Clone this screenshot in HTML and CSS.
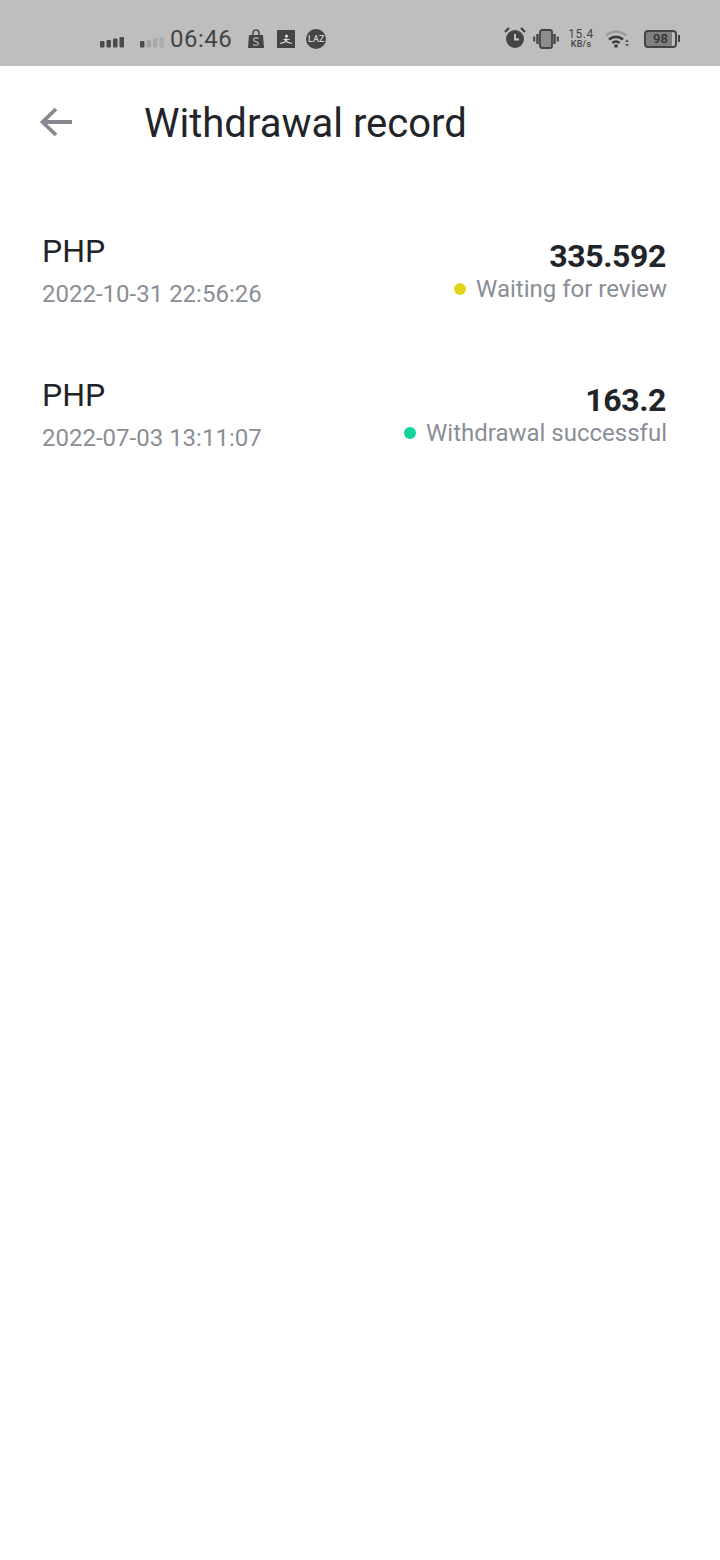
FILE: index.html
```html
<!DOCTYPE html>
<html lang="en">
<head>
<meta charset="utf-8">
<title>Withdrawal record</title>
<link rel="stylesheet" href="styles.css">
</head>
<body>
<div class="statusbar">
  <div class="sb-left">
    <svg class="sig" width="25" height="12" viewBox="0 0 25 12"><rect x="0" y="5" width="4.500" height="6.500" rx="1" fill="#4a4a4a"/><rect x="6.500" y="4" width="4.500" height="7.500" rx="1" fill="#4a4a4a"/><rect x="13" y="2.500" width="4.500" height="9" rx="1" fill="#4a4a4a"/><rect x="19.500" y="1" width="4.500" height="10.500" rx="1" fill="#4a4a4a"/></svg>
    <svg class="sig2" width="25" height="12" viewBox="0 0 25 12"><rect x="0" y="5" width="4.500" height="6.500" rx="1" fill="#4a4a4a"/><rect x="6.500" y="4" width="4.500" height="7.500" rx="1" fill="#a2a2a2"/><rect x="13" y="2.500" width="4.500" height="9" rx="1" fill="#a8a8a8"/><rect x="19.500" y="1" width="4.500" height="10.500" rx="1" fill="#acacac"/></svg>
    <span class="time">06:46</span>
    <svg class="ic-shop" width="16" height="20" viewBox="0 0 16 20"><path d="M5 6V4a3 3 0 0 1 6 0v2" fill="none" stroke="#444" stroke-width="1.500"/><path d="M1 6h14l1 13H0z" fill="#444"/><path d="M10.500 9.500c-1-1-5-1-5 1.300s5 1.400 5 3.700-4 2-5.500 1" fill="none" stroke="#bdbdbd" stroke-width="1.100"/></svg>
    <svg class="ic-run" width="18" height="18" viewBox="0 0 18 18"><rect width="18" height="18" fill="#444"/><circle cx="9.500" cy="6" r="1.500" fill="#ddd"/><path d="M3 13.500l5-1.500 1-3 1 3 5 1.500M6.500 9.500h6" fill="none" stroke="#ddd" stroke-width="1.200"/></svg>
    <span class="ic-laz">LAZ</span>
  </div>
  <div class="sb-right">
    <svg class="ic-alarm" width="22" height="22" viewBox="0 0 22 22"><circle cx="11" cy="12" r="9" fill="#444"/><path d="M11 7v5.500h4" fill="none" stroke="#ccc" stroke-width="1.800"/><path d="M1 5l4-4M21 5l-4-4" stroke="#444" stroke-width="2.400"/></svg>
    <svg class="ic-vib" width="26" height="20" viewBox="0 0 26 20"><rect x="7" y="1" width="12" height="18" rx="2" fill="#8c8c8c" stroke="#444" stroke-width="1.800"/><path d="M4.500 5v10M21.500 5v10" stroke="#444" stroke-width="2.400"/><path d="M1.200 7.500v5M24.800 7.500v5" stroke="#444" stroke-width="2"/></svg>
    <div class="speed"><span class="speed-n">15.4</span><span class="speed-u">KB/s</span></div>
    <svg class="ic-wifi" width="25" height="18" viewBox="0 0 25 18"><path d="M1 5.500a15 15 0 0 1 20 0" fill="none" stroke="#9a9a9a" stroke-width="2.600"/><path d="M4 9.500a10.500 10.500 0 0 1 14 0" fill="none" stroke="#3c3c3c" stroke-width="2.800"/><path d="M7.500 13a5 5 0 0 1 7 0" fill="none" stroke="#3c3c3c" stroke-width="2.800"/><circle cx="11" cy="16" r="1.800" fill="#3c3c3c"/><path d="M20 12l2-2.500 2 2.500zM20 14l2 2.500 2-2.500z" fill="#555"/></svg>
    <div class="battery"><span class="batt-body"><span class="batt-txt">98</span></span><span class="batt-tip"></span></div>
  </div>
</div>
<header class="topbar">
  <svg class="back" width="34" height="32" viewBox="0 0 34 32"><path d="M33 16H3.500M17 3L3.500 16 17 29" fill="none" stroke="#868a90" stroke-width="3.800"/></svg>
  <h1 class="title">Withdrawal record</h1>
</header>
<main class="list">
  <div class="row">
    <div class="col-left"><div class="cur">PHP</div><div class="date">2022-10-31 22:56:26</div></div>
    <div class="col-right"><div class="amount">335.592</div><div class="status"><span class="dot dot-wait"></span>Waiting for review</div></div>
  </div>
  <div class="row">
    <div class="col-left"><div class="cur">PHP</div><div class="date">2022-07-03 13:11:07</div></div>
    <div class="col-right"><div class="amount">163.2</div><div class="status"><span class="dot dot-ok"></span>Withdrawal successful</div></div>
  </div>
</main>
</body>
</html>
```
FILE: styles.css
```css
* { box-sizing: border-box; }
html, body { margin: 0; padding: 0; }
body { width: 720px; height: 1560px; background: #fff; font-family: Roboto, "Liberation Sans", sans-serif; overflow: hidden; }
.statusbar { height: 66px; background: #bebebe; display: flex; justify-content: space-between; align-items: center; padding: 11px 40px 0 100px; color: #444; }
.sb-left, .sb-right { display: flex; align-items: center; }
.sig { margin-top: 7px; }
.sig2 { margin-left: 15px; margin-top: 7px; }
.time { font-size: 24px; margin-left: 5px; letter-spacing: 0.5px; color: #444; }
.ic-shop { margin-left: 16px; }
.ic-run { margin-left: 13px; }
.ic-laz { width: 20px; height: 20px; margin-left: 11px; border-radius: 50%; background: #444; color: #ccc; font-size: 9px; font-weight: 500; display: flex; align-items: center; justify-content: center; }
.ic-alarm { margin-top: -1px; }
.ic-vib { margin-left: 7px; }
.speed { display: flex; flex-direction: column; align-items: center; margin-left: 9px; line-height: 1; width: 26px; }
.speed-n { font-size: 12px; letter-spacing: 0.5px; }
.speed-u { font-size: 9px; font-weight: 500; letter-spacing: 0.3px; }
.ic-wifi { margin-left: 11px; }
.battery { display: flex; align-items: center; margin-left: 14px; }
.batt-body { width: 33px; height: 18px; border: 2px solid #444; border-radius: 4px; background: linear-gradient(90deg, #808080 88%, #bebebe 88%); display: flex; align-items: center; justify-content: center; }
.batt-txt { font-size: 13px; font-weight: 500; color: #333; }
.batt-tip { width: 2px; height: 7px; background: #444; margin-left: 1px; }
.topbar { display: flex; align-items: center; height: 112px; padding-left: 39px; }
.title { margin: 4px 0 0 71px; font-size: 40px; font-weight: 400; color: #22242a; line-height: 1; }
.list { padding: 53px 53px 0 42px; }
.row { display: flex; justify-content: space-between; height: 144px; }
.cur { font-size: 32px; line-height: 40px; color: #22242a; }
.date { font-size: 24px; line-height: 34px; color: #8a8e96; margin-top: 6px; }
.col-right { display: flex; flex-direction: column; align-items: flex-end; }
.amount { font-size: 32px; font-weight: 700; line-height: 40px; letter-spacing: -0.4px; color: #22242a; margin: 5px 1px 0 0; }
.status { display: flex; align-items: center; font-size: 24px; line-height: 28px; color: #8a8e96; margin-top: -1px; }
.dot { width: 12px; height: 12px; border-radius: 50%; margin-right: 10px; }
.dot-wait { background: #e2d31b; }
.dot-ok { background: #14d29c; }
```
